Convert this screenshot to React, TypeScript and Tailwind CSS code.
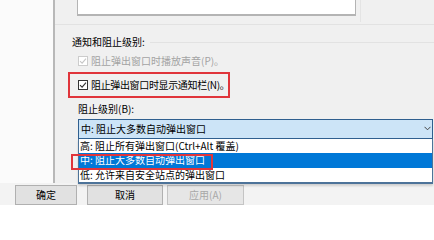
import React from 'react';

function Check({ disabled }: { disabled?: boolean }) {
  const c = disabled ? '#c6c6c6' : '#333333';
  return (
    <span
      className={`flex h-[10px] w-[10px] shrink-0 items-center justify-center border bg-white ${
        disabled ? 'border-[#cccccc]' : 'border-[#333333]'
      }`}
    >
      <svg width="8" height="8" viewBox="0 0 8 8">
        <path d="M1 4.2 L3.1 6.2 L7 1.6" fill="none" stroke={c} strokeWidth="1.1" />
      </svg>
    </span>
  );
}

const items = ['高: 阻止所有弹出窗口(Ctrl+Alt 覆盖)', '中: 阻止大多数自动弹出窗口', '低: 允许来自安全站点的弹出窗口'];

export default function App() {
  return (
    <div className="flex h-[205px] w-[434px] flex-col overflow-hidden whitespace-nowrap bg-white font-['Noto_Sans_CJK_SC','Noto_Sans',sans-serif] text-[10px] leading-none text-black">
      <div className="flex h-[183px] shrink-0">
        <div className="w-[53px] shrink-0 bg-[#fbfbfb]" />
        <div className="relative z-10 flex flex-1 flex-col border-l-2 border-[#b8b8b8] bg-[#f0f0f0]">
          {/* exceptions list (bottom of it) */}
          <div className="flex h-[25px] shrink-0 border-b border-[#e2e2e2]">
            <div className="ml-[22px] h-[16px] w-[279px] border-x border-b-2 border-[#b4b4b4] bg-white" />
            <div className="ml-[4px] h-[22px] w-px bg-[#e4e4e4]" />
          </div>

          <div className="flex flex-col pl-[13px]">
            <div className="mt-[10px] flex h-[14px] items-center gap-[5px] pl-[4px]">
              <span>通知和阻止级别:</span>
              <div className="h-px flex-1 bg-[#e2e2e2]" />
            </div>

            <div className="mt-[5px] flex h-[14px] items-center gap-[3px] pl-[10px] text-[#a3a3a3]">
              <Check disabled />
              <span>阻止弹出窗口时播放声音(P)。</span>
            </div>

            <div className="mt-[4px] flex h-[26px] w-[162px] items-center gap-[3px] border-2 border-[#e0353b] pl-[8px]">
              <Check />
              <span className="tracking-[-0.35px]">阻止弹出窗口时显示通知栏(N)。</span>
            </div>

            <div className="mt-[4px] flex h-[14px] items-center pl-[10px]">
              <span>阻止级别(B):</span>
            </div>

            <div className="relative ml-[10px] mt-[3px] h-[20px] w-[355px]">
              <div className="flex h-full items-center border border-[#2f5f8f] bg-[#cce4f7] pl-[2px]">
                <span>中: 阻止大多数自动弹出窗口</span>
                <svg className="absolute right-[2px] top-[7px]" width="7" height="5" viewBox="0 0 7 5">
                  <path d="M0.5 0.8 L3.5 3.8 L6.5 0.8" fill="none" stroke="#444" strokeWidth="1" />
                </svg>
              </div>
              {/* open dropdown list */}
              <div className="absolute left-0 top-full flex h-[45px] w-full flex-col border-x border-b-2 border-[#4d7399] bg-white shadow-[0_2px_2px_rgba(0,0,0,0.15)]">
                {items.map((t, i) => (
                  <div
                    key={t}
                    className={`flex h-[14.5px] items-center pl-[1px] ${i === 1 ? 'bg-[#0078d7] text-white' : ''}`}
                  >
                    {t}
                  </div>
                ))}
              </div>
              <div className="absolute left-[-7px] top-[35px] h-[16px] w-[142px] border-2 border-[#e0353b]" />
            </div>
          </div>
        </div>
      </div>

      {/* parent window buttons */}
      <div className="flex flex-1 bg-[#f3f3f3] pt-[2px]">
        <div className="ml-[15px] flex w-[62px] items-center justify-center border border-[#b0b0b0] bg-[#e1e1e1]">确定</div>
        <div className="ml-[10px] flex w-[76px] items-center justify-center border border-[#b0b0b0] bg-[#e1e1e1]">取消</div>
        <div className="ml-[4px] flex w-[77px] items-center justify-center border border-[#c4c4c4] bg-[#e6e6e6] text-[#a8a8a8]">应用(A)</div>
      </div>
    </div>
  );
}
